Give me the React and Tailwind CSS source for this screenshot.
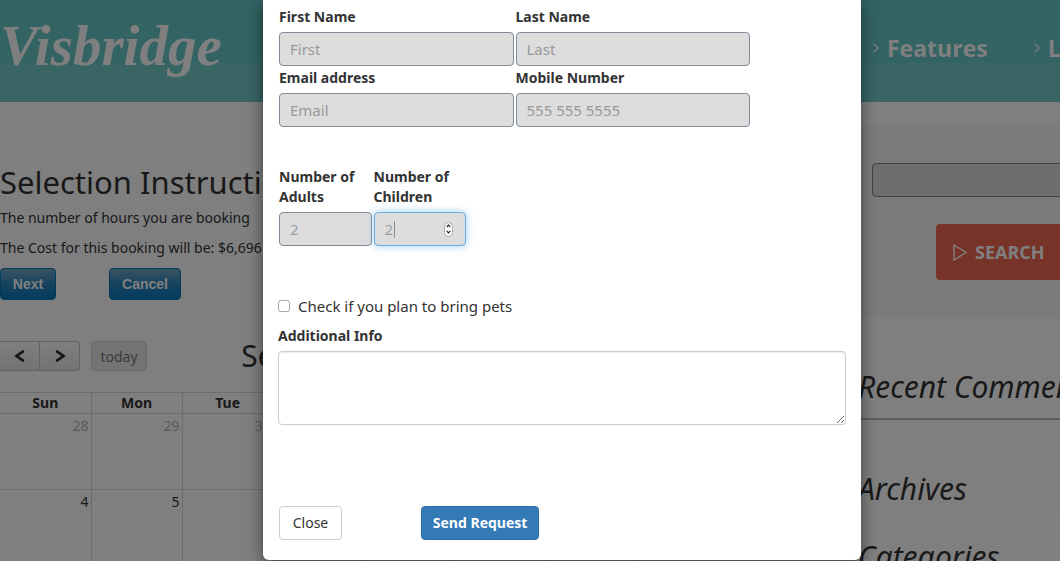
import { useState } from "react";

const days = ["Sun", "Mon", "Tue", "Wed", "Thu", "Fri", "Sat"];
const weeks = [
  [28, 29, 30, 31, 1, 2, 3],
  [4, 5, 6, 7, 8, 9, 10],
];

const inputClass =
  "h-[34px] w-full rounded border border-[#7f8b99] bg-[#dddddd] px-2.5 text-[15px] text-[#999fa8] placeholder:text-[#999999] outline-none";

function Chevron({ flip }) {
  return (
    <svg viewBox="0 0 12 12" className={flip ? "size-3" : "size-3 -scale-x-100"} aria-hidden="true">
      <path d="M2.2 1 L9.6 6 L2.2 11" fill="none" stroke="#222" strokeWidth="2.6" />
    </svg>
  );
}

function NavLink({ children }) {
  return (
    <a href="#" className="flex items-center gap-2">
      <svg viewBox="0 0 6 10" className="h-2.5 w-1.5" aria-hidden="true">
        <path d="M0.7 0.7 L5.2 5 L0.7 9.3" fill="none" stroke="white" strokeWidth="1.2" />
      </svg>
      <span>{children}</span>
    </a>
  );
}

function Field({ id, label, children }) {
  return (
    <div>
      <label htmlFor={id} className="mb-[5px] block font-bold">
        {label}
      </label>
      {children}
    </div>
  );
}

function Header() {
  return (
    <header className="flex h-[102px] items-start justify-between bg-linear-to-b from-[#66c6c6] from-62% to-[#72caca] to-62%">
      <div className="pt-3 font-['Liberation_Serif',serif] text-[57px] leading-[68px] font-bold text-white italic">
        Visbridge
      </div>
      <nav className="flex w-[187px] shrink-0 gap-[46px] overflow-hidden pt-8 font-['Open_Sans',sans-serif] text-[23px] leading-8 font-bold text-white">
        <NavLink>Features</NavLink>
        <NavLink>L</NavLink>
      </nav>
    </header>
  );
}

function Calendar() {
  return (
    <section className="mt-10 w-[638px]">
      <div className="grid grid-cols-[1fr_auto_1fr] items-center">
        <div className="flex gap-[11px]">
          <div className="flex h-[30px] w-20 overflow-hidden rounded-r border border-l-0 border-[#c4c4c4] bg-linear-to-b from-white to-[#e6e6e6]">
            <button aria-label="Previous month" className="flex w-10 items-center justify-center border-r border-[#c4c4c4]">
              <Chevron />
            </button>
            <button aria-label="Next month" className="flex flex-1 items-center justify-center">
              <Chevron flip />
            </button>
          </div>
          <button className="h-[30px] w-14 rounded border border-[#d0d0d0] bg-[#e8e8e8] text-[14px] text-[#777]">
            today
          </button>
        </div>
        <h2 className="text-[30px] leading-8">September</h2>
        <div />
      </div>
      <table className="mt-5 w-full table-fixed border-collapse text-[14px]">
        <thead>
          <tr>
            {days.map((d) => (
              <th key={d} className="h-[21px] border border-l-0 border-[#d8d8d8] p-0 leading-5">
                {d}
              </th>
            ))}
          </tr>
        </thead>
        <tbody>
          {weeks.map((week, w) => (
            <tr key={week[0]}>
              {week.map((n) => (
                <td
                  key={n}
                  className={
                    w === 0 && n > 20
                      ? "h-[76px] border border-l-0 border-[#d8d8d8] p-0.5 text-right align-top leading-5 text-[#b4b4b4]"
                      : "h-[76px] border border-l-0 border-[#d8d8d8] p-0.5 text-right align-top leading-5"
                  }
                >
                  {n}
                </td>
              ))}
            </tr>
          ))}
        </tbody>
      </table>
    </section>
  );
}

function Sidebar() {
  return (
    <aside className="w-[202px] shrink-0 overflow-hidden pt-[23px]">
      <form className="h-[193px] bg-[#f4f6fa] pt-[38px] pl-3.5">
        <input aria-label="Search" className="h-[34px] w-[260px] rounded border border-[#7f8b99] bg-[#dddddd]" />
        <button
          type="button"
          className="mt-[27px] ml-16 flex h-14 w-[150px] items-center gap-2 rounded bg-[#ee664f] pl-[17px] font-['Open_Sans',sans-serif] text-[18px] font-bold text-white"
        >
          <svg viewBox="0 0 14 17" className="h-[17px] w-3.5" aria-hidden="true">
            <path d="M1 1 L13 8.5 L1 16 Z" fill="none" stroke="white" strokeWidth="1.4" />
          </svg>
          SEARCH
        </button>
      </form>
      <div className="text-[30px] leading-10 whitespace-nowrap italic">
        <h2 className="mt-[49px] border-b-2 border-[#bbb] pb-[11px]">Recent Comments</h2>
        <h2 className="mt-[49px]">Archives</h2>
        <h2 className="mt-7">Categories</h2>
      </div>
    </aside>
  );
}

const blueButton =
  "h-8 border border-[#0877b8] bg-linear-to-b from-[#72a8c4] via-[#2a86bd] to-[#0078c0] font-['Liberation_Sans',sans-serif] text-[14px] font-bold text-white";

function BookingDialog() {
  const [children, setChildren] = useState("2");
  const step = (n) => setChildren(String(Math.max(0, Number(children) + n)));
  return (
    <div
      role="dialog"
      aria-label="Booking request"
      className="w-full max-w-[598px] self-start rounded-b-md bg-white px-[15px] pt-[7px] pb-5 text-[14px] leading-5 shadow-[0_5px_15px_rgba(0,0,0,0.5)]"
    >
      <form>
        <div className="ml-px grid w-[471px] grid-cols-2 gap-x-0.5 gap-y-[2px]">
          <Field id="first" label="First Name">
            <input id="first" placeholder="First" className={inputClass} />
          </Field>
          <Field id="last" label="Last Name">
            <input id="last" placeholder="Last" className={inputClass} />
          </Field>
          <Field id="email" label="Email address">
            <input id="email" type="email" placeholder="Email" className={inputClass} />
          </Field>
          <Field id="mobile" label="Mobile Number">
            <input id="mobile" type="tel" placeholder="555 555 5555" className={inputClass} />
          </Field>
        </div>
        <div className="mt-10 ml-px grid w-[187px] grid-cols-2 gap-x-0.5">
          <Field id="adults" label="Number of Adults">
            <input id="adults" defaultValue="2" inputMode="numeric" className={inputClass} />
          </Field>
          <Field id="children" label="Number of Children">
            <div className="flex h-[34px] items-center rounded border border-[#66afe9] bg-[#dddddd] px-2.5 text-[#999fa8] shadow-[0_0_8px_rgba(102,175,233,0.6)]">
              <input
                id="children"
                value={children}
                onChange={(e) => setChildren(e.target.value)}
                inputMode="numeric"
                size={1}
                className="h-full w-[9px] bg-transparent text-[15px] outline-none"
              />
              <span className="h-[17px] w-px bg-[#888]" />
              <div className="mr-0.5 ml-auto flex h-[15px] w-[9px] flex-col overflow-hidden rounded-full border border-[#aaa] bg-white">
                <button type="button" aria-label="More children" onClick={() => step(1)} className="flex flex-1 items-center justify-center">
                  <svg viewBox="0 0 5 4" className="h-1 w-[5px]"><path d="M0.7 3.2 L2.5 1 L4.3 3.2" fill="none" stroke="#333" strokeWidth="1.2" /></svg>
                </button>
                <button type="button" aria-label="Fewer children" onClick={() => step(-1)} className="flex flex-1 items-center justify-center">
                  <svg viewBox="0 0 5 4" className="h-1 w-[5px]"><path d="M0.7 0.8 L2.5 3 L4.3 0.8" fill="none" stroke="#333" strokeWidth="1.2" /></svg>
                </button>
              </div>
            </div>
          </Field>
        </div>
        <label className="mt-[50px] flex items-center gap-2 text-[15px]">
          <input type="checkbox" className="size-3 appearance-none rounded-[3px] border border-[#aaa] bg-white checked:bg-[#337ab7]" />
          Check if you plan to bring pets
        </label>
        <label htmlFor="info" className="mt-2.5 mb-[5px] block font-bold">
          Additional Info
        </label>
        <textarea id="info" className="block h-[74px] w-full rounded border border-[#ccc] px-3 py-1.5 shadow-[inset_0_1px_1px_rgba(0,0,0,0.075)]" />
        <div className="mt-[81px] ml-px flex gap-[79px]">
          <button type="button" className="h-[34px] w-[63px] rounded border border-[#ccc] bg-white">
            Close
          </button>
          <button type="button" className="h-[34px] w-[118px] rounded border border-[#2e6da4] bg-[#337ab7] font-['Open_Sans',sans-serif] font-bold text-white">
            Send Request
          </button>
        </div>
      </form>
    </div>
  );
}

export default function App() {
  return (
    <div className="relative h-screen overflow-hidden bg-white font-['Noto_Sans',sans-serif] text-[#333]">
      <Header />
      <div className="flex">
        <main className="min-w-0 flex-1 pt-[60px]">
          <h1 className="text-[31px] leading-10 whitespace-nowrap">Selection Instructions</h1>
          <div className="mt-1.5 mb-2.5 space-y-2.5 text-[14px] leading-5">
            <p>The number of hours you are booking</p>
            <p>The Cost for this booking will be: $6,696</p>
          </div>
          <div className="flex gap-[53px]">
            <button className={blueButton + " w-14 rounded"}>Next</button>
            <button className={blueButton + " w-[72px] rounded"}>Cancel</button>
          </div>
          <Calendar />
        </main>
        <Sidebar />
      </div>
      <div className="absolute inset-0 flex justify-center bg-black/50 pl-16">
        <BookingDialog />
      </div>
    </div>
  );
}
